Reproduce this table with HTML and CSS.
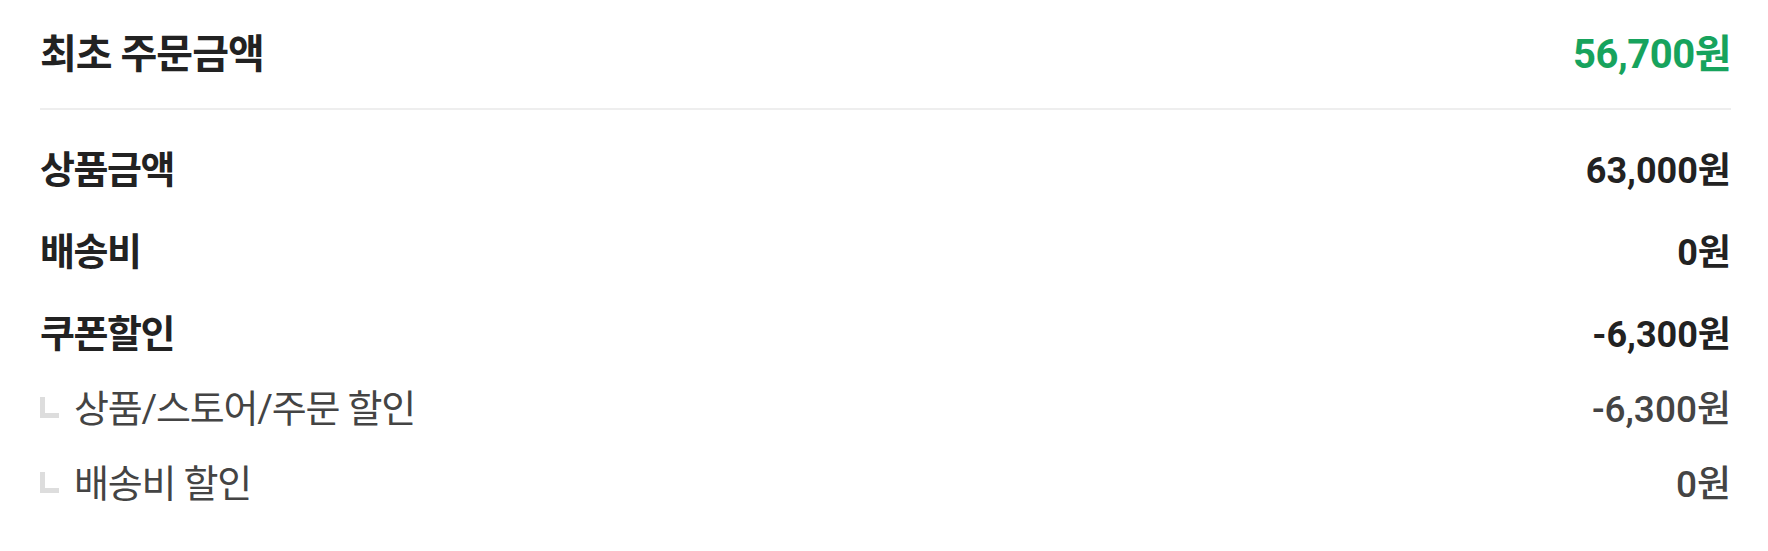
FILE: index.html
```html
<!DOCTYPE html>
<html lang="ko">
<head>
<meta charset="utf-8">
<link rel="stylesheet" href="styles.css">
</head>
<body>
<section class="summary">
  <div class="summary-head">
    <h2 class="summary-title">최초 주문금액</h2>
    <strong class="summary-total">56,700원</strong>
  </div>
  <ul class="summary-list">
    <li class="row row-main"><span class="label">상품금액</span><span class="value">63,000원</span></li>
    <li class="row row-main"><span class="label">배송비</span><span class="value">0원</span></li>
    <li class="row row-main"><span class="label">쿠폰할인</span><span class="value">-6,300원</span></li>
    <li class="row row-sub"><span class="label"><i class="branch"></i>상품/스토어/주문 할인</span><span class="value">-6,300원</span></li>
    <li class="row row-sub"><span class="label"><i class="branch"></i>배송비 할인</span><span class="value">0원</span></li>
  </ul>
</section>
</body>
</html>
```
FILE: styles.css
```css
html, body {
  margin: 0;
  padding: 0;
  background: #fff;
}
body {
  font-family: Roboto, "Noto Sans CJK KR", sans-serif;
  color: #222;
}
.summary {
  padding: 0 37px 0 40px;
}
.summary-head {
  display: flex;
  justify-content: space-between;
  align-items: center;
  height: 102px;
  padding-bottom: 6px;
  border-bottom: 2px solid #eeeeee;
}
.summary-title {
  margin: 0;
  font-size: 40px;
  font-weight: 700;
  letter-spacing: -1px;
  color: #222;
}
.summary-total {
  font-size: 40px;
  font-weight: 700;
  letter-spacing: -0.5px;
  color: #17a35d;
}
.summary-list {
  list-style: none;
  margin: 0;
  padding: 12px 0 0;
}
.row {
  display: flex;
  justify-content: space-between;
  align-items: center;
  height: 75px;
}
.row-main {
  margin-top: 7px;
  font-weight: 700;
  color: #222;
}
.row-main .label {
  font-size: 38px;
  letter-spacing: -1.5px;
}
.row-main .value {
  font-size: 36px;
}
.row-sub {
  font-weight: 400;
  color: #444;
}
.row-sub .label {
  font-size: 38px;
  letter-spacing: -1.2px;
}
.row-sub .value {
  font-size: 37px;
  font-weight: 500;
}
.label {
  display: flex;
  align-items: center;
}
.branch {
  display: inline-block;
  width: 14px;
  height: 16px;
  margin: 4px 15px 0 0;
  border-left: 5px solid #dddddd;
  border-bottom: 5px solid #dddddd;
}
```
